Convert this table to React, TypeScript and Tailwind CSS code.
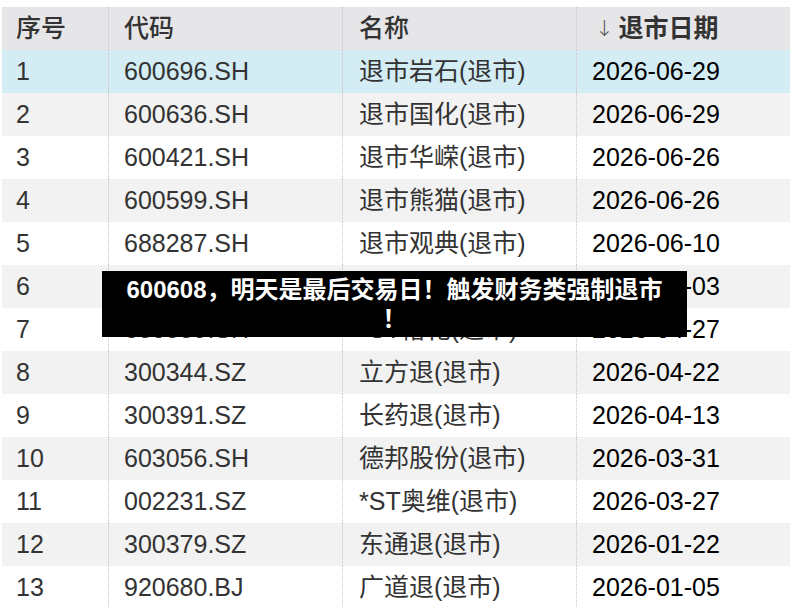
const rows = [
  ["1", "600696.SH", "退市岩石(退市)", "2026-06-29"],
  ["2", "600636.SH", "退市国化(退市)", "2026-06-29"],
  ["3", "600421.SH", "退市华嵘(退市)", "2026-06-26"],
  ["4", "600599.SH", "退市熊猫(退市)", "2026-06-26"],
  ["5", "688287.SH", "退市观典(退市)", "2026-06-10"],
  ["6", "600608.SH", "ST沪科(退市)", "2026-06-03"],
  ["7", "600589.SH", "*ST榕化(退市)", "2026-04-27"],
  ["8", "300344.SZ", "立方退(退市)", "2026-04-22"],
  ["9", "300391.SZ", "长药退(退市)", "2026-04-13"],
  ["10", "603056.SH", "德邦股份(退市)", "2026-03-31"],
  ["11", "002231.SZ", "*ST奥维(退市)", "2026-03-27"],
  ["12", "300379.SZ", "东通退(退市)", "2026-01-22"],
  ["13", "920680.BJ", "广道退(退市)", "2026-01-05"],
];

const font = "font-['Liberation_Sans','Noto_Sans_CJK_SC',sans-serif]";
const sep = "border-l border-dotted border-[#cdbfc6]";

export default function App() {
  return (
    <div className={`relative h-[608px] w-[790px] overflow-hidden bg-white pt-[7px] pl-[2px] ${font}`}>
      <div className="grid grid-cols-[106px_234px_234px_1fr] text-[25px]">
        {/* header */}
        <div className="contents text-[#333] font-medium">
          <div className="flex h-[43px] items-center bg-[#e6e6e9] pl-[14px]">序号</div>
          <div className={`flex h-[43px] items-center bg-[#e6e6e9] pl-[15px] ${sep}`}>代码</div>
          <div className={`flex h-[43px] items-center bg-[#e6e6e9] pl-[16px] ${sep}`}>名称</div>
          <div className={`flex h-[43px] items-center bg-[#e6e6e9] pl-[18px] font-bold ${sep}`}>
            <span className="mr-[5px] font-['DejaVu_Sans',sans-serif] text-[22px] font-light text-[#555]">↓</span>
            退市日期
          </div>
        </div>

        {rows.map((r, i) => {
          const bg = i === 0 ? "bg-[#d4edf5]" : i % 2 === 1 ? "bg-[#f2f2f2]" : "bg-white";
          return (
            <div key={r[0]} className="contents">
              <div className={`flex h-[43px] items-center pl-[14px] text-[#333] ${bg}`}>{r[0]}</div>
              <div className={`flex h-[43px] items-center pl-[15px] text-[#333] ${bg} ${sep}`}>{r[1]}</div>
              <div className={`flex h-[43px] items-center pl-[16px] text-[#333] ${bg} ${sep}`}>{r[2]}</div>
              <div className={`flex h-[43px] items-center pl-[15px] text-black ${bg} ${sep}`}>{r[3]}</div>
            </div>
          );
        })}
      </div>

      {/* headline banner over the table */}
      <div className="absolute left-[102px] top-[271px] w-[585px] bg-black px-[11px] py-[4px] text-center text-[24px] font-bold leading-[29px] text-white">
        600608，明天是最后交易日！触发财务类强制退市
        <br />！
      </div>
    </div>
  );
}
